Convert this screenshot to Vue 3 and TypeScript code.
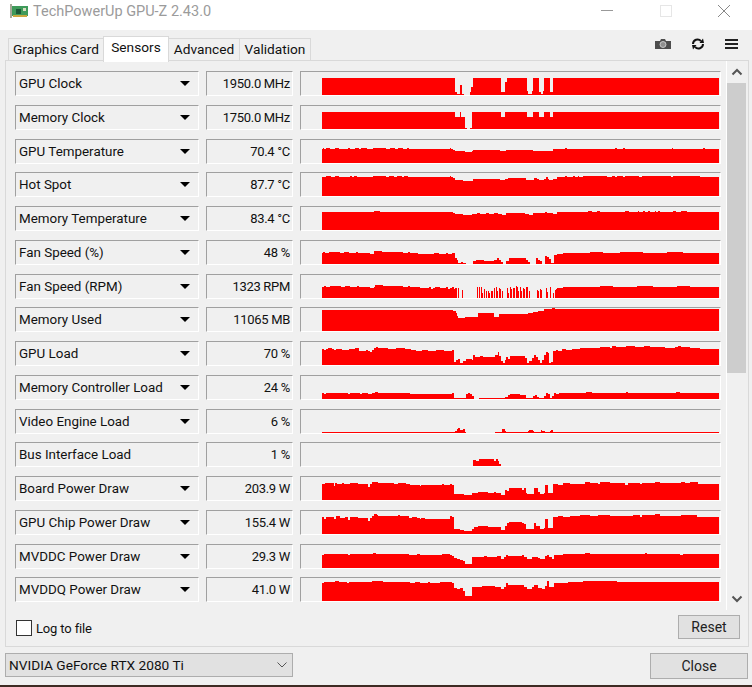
<script setup lang="ts">
type Step = [number, number]
interface Sensor { name: string; value: string; arrow: boolean; steps: Step[] }

// Step x values are measured at 3x from the graph box's 300px origin; the plot starts at 22px.
const W = 397
function path(steps: Step[]): string {
  let d = ''
  for (let i = 0; i < steps.length; i++) {
    const x = Math.round(steps[i][0] / 3 - 22)
    const h = steps[i][1]
    const end = i + 1 < steps.length ? Math.round(steps[i + 1][0] / 3 - 22) : W
    if (h > 0 && end > x) d += `M${x} 24V${24 - h}H${end}V24Z`
  }
  return d
}

const sensors: Sensor[] = [
  { name: 'GPU Clock', value: '1950.0 MHz', arrow: true, steps: [[66,17],[465,3],[470,1],[480,10],[487,1],[492,0],[510,3],[514,8],[520,17],[603,3],[615,13],[620,17],[680,4],[684,1],[696,4],[700,17],[718,3],[722,1],[729,4],[732,17],[750,3],[758,17]] },
  { name: 'Memory Clock', value: '1750.0 MHz', arrow: true, steps: [[66,17],[465,12],[480,17],[484,12],[495,1],[500,0],[510,1],[515,17],[603,12],[615,17],[680,12],[700,17],[718,12],[732,17],[750,12],[760,17]] },
  { name: 'GPU Temperature', value: '70.4 °C', arrow: true, steps: [[66,14],[69,15],[72,14],[78,15],[90,14],[105,15],[117,14],[145,15],[150,14],[165,15],[178,14],[183,15],[200,14],[219,15],[258,14],[270,15],[285,14],[295,15],[310,14],[320,15],[327,14],[450,15],[453,14],[460,13],[465,12],[495,11],[515,12],[520,13],[600,12],[618,13],[700,12],[760,14],[795,15],[800,14],[945,15],[952,14],[970,15],[974,14],[1115,15],[1120,14],[1210,15],[1215,14]] },
  { name: 'Hot Spot', value: '87.7 °C', arrow: true, steps: [[66,19],[78,20],[92,19],[105,20],[118,19],[150,20],[156,19],[162,20],[171,19],[219,20],[258,19],[268,20],[282,19],[291,20],[306,19],[312,20],[324,19],[450,20],[453,19],[459,18],[465,16],[490,15],[518,17],[600,16],[615,17],[625,18],[678,16],[702,18],[712,17],[716,16],[732,17],[737,19],[743,17],[747,16],[760,17],[770,19],[795,20],[800,19],[818,20],[824,19],[833,20],[838,19],[850,20],[922,19],[935,20],[945,19],[952,20],[970,19],[975,20],[1017,19],[1026,20],[1113,19],[1120,20],[1200,19]] },
  { name: 'Memory Temperature', value: '83.4 °C', arrow: true, steps: [[66,18],[222,19],[240,18],[458,17],[465,16],[490,15],[515,16],[530,17],[540,16],[558,17],[566,16],[582,17],[594,16],[606,15],[618,17],[675,16],[688,15],[700,17],[735,18],[741,17],[760,16],[770,18],[865,19],[875,18],[890,19],[900,18],[975,19],[987,18],[1015,19],[1018,18],[1030,19],[1035,18],[1045,19],[1050,18],[1065,19],[1068,18],[1075,19],[1080,18],[1118,19],[1128,18],[1143,19],[1160,18]] },
  { name: 'Fan Speed (%)', value: '48 %', arrow: true, steps: [[66,11],[70,12],[76,11],[87,12],[120,11],[132,12],[147,11],[168,12],[174,11],[210,10],[222,13],[246,12],[309,11],[324,12],[330,11],[354,10],[402,11],[417,10],[438,11],[444,10],[456,11],[465,6],[471,4],[474,1],[483,2],[489,1],[498,0],[519,3],[528,4],[552,3],[582,4],[591,6],[597,4],[603,2],[609,0],[618,3],[627,6],[678,4],[684,2],[690,0],[708,6],[714,4],[720,3],[726,0],[735,8],[741,7],[747,5],[753,1],[762,9],[771,10],[789,11],[870,12],[910,11],[960,12],[1030,11],[1100,12],[1150,11]] },
  { name: 'Fan Speed (RPM)', value: '1323 RPM', arrow: true, steps: [[66,11],[72,12],[78,11],[90,12],[123,11],[135,12],[150,11],[171,12],[177,11],[210,10],[222,11],[225,13],[249,12],[309,11],[324,12],[330,11],[360,10],[387,11],[393,9],[399,10],[405,11],[420,10],[438,11],[444,9],[450,10],[456,11],[462,9],[465,10],[471,0],[474,10],[477,0],[486,8],[489,0],[531,11],[534,0],[537,11],[540,0],[543,11],[546,5],[549,0],[552,9],[555,0],[558,7],[561,0],[564,7],[567,5],[570,0],[573,7],[579,0],[582,10],[585,0],[588,11],[591,7],[594,0],[597,10],[600,9],[603,0],[606,7],[609,0],[621,10],[624,5],[627,0],[630,11],[633,9],[636,0],[639,10],[645,0],[648,12],[651,11],[654,7],[657,0],[660,11],[663,7],[666,0],[669,10],[672,9],[675,0],[678,11],[684,0],[687,7],[690,0],[711,8],[714,7],[717,0],[720,9],[723,8],[726,0],[738,10],[741,6],[744,0],[750,11],[753,0],[759,5],[762,0],[765,8],[768,9],[771,10],[789,11],[900,12],[940,11],[1010,12],[1060,11],[1130,12],[1170,11]] },
  { name: 'Memory Used', value: '11065 MB', arrow: true, steps: [[66,21],[459,20],[468,18],[471,15],[474,13],[495,14],[534,18],[582,14],[597,17],[684,18],[699,19],[714,20],[732,22],[756,23],[765,22]] },
  { name: 'GPU Load', value: '70 %', arrow: true, steps: [[66,16],[72,15],[78,16],[84,17],[96,16],[102,15],[108,16],[126,15],[147,16],[165,17],[177,14],[198,15],[204,14],[210,13],[216,15],[222,17],[228,18],[234,17],[264,16],[288,17],[315,16],[333,15],[348,14],[366,15],[384,14],[408,15],[432,14],[456,15],[462,3],[468,5],[474,6],[480,2],[489,4],[498,6],[516,5],[519,10],[525,8],[540,9],[549,8],[585,10],[594,13],[597,9],[603,4],[609,2],[615,5],[618,8],[624,6],[630,9],[675,7],[681,2],[687,4],[696,7],[702,10],[708,8],[714,5],[720,2],[726,5],[732,10],[738,13],[744,12],[747,2],[753,3],[759,14],[768,15],[774,14],[786,16],[798,15],[816,16],[840,17],[900,18],[930,17],[936,19],[948,18],[978,19],[1005,18],[1032,19],[1050,18],[1095,17],[1125,18],[1134,19],[1143,18],[1170,17],[1200,16]] },
  { name: 'Memory Controller Load', value: '24 %', arrow: true, steps: [[66,6],[72,5],[78,6],[144,5],[150,6],[180,5],[186,6],[204,5],[216,6],[225,7],[234,6],[330,5],[450,5],[456,6],[462,1],[498,5],[504,6],[510,5],[516,3],[522,0],[537,1],[615,2],[624,4],[630,5],[660,4],[678,1],[699,3],[705,4],[711,2],[717,1],[732,3],[738,6],[744,5],[750,1],[756,3],[762,6],[768,5],[777,6],[858,7],[876,6],[978,7],[984,6],[1128,7],[1140,6]] },
  { name: 'Video Engine Load', value: '6 %', arrow: true, steps: [[66,1],[465,2],[470,4],[475,5],[480,3],[490,4],[495,1],[498,0],[585,1],[606,4],[615,2],[618,1],[684,2],[687,3],[699,2],[702,1],[723,3],[726,2],[735,1],[750,2],[753,3],[759,1]] },
  { name: 'Bus Interface Load', value: '1 %', arrow: false, steps: [[66,0],[519,6],[528,5],[537,7],[582,5],[588,7],[594,5],[597,2],[603,0]] },
  { name: 'Board Power Draw', value: '203.9 W', arrow: true, steps: [[66,16],[75,17],[102,14],[105,17],[111,16],[126,17],[132,16],[150,17],[174,16],[204,13],[210,16],[216,18],[234,17],[282,16],[294,17],[318,16],[330,15],[360,14],[363,15],[426,16],[432,15],[450,16],[456,15],[462,6],[492,5],[516,7],[534,8],[564,7],[582,8],[588,7],[603,5],[615,10],[621,9],[627,12],[666,10],[672,12],[678,7],[681,6],[702,12],[714,8],[720,6],[732,7],[735,15],[744,7],[759,16],[774,15],[790,17],[810,16],[855,18],[870,17],[894,16],[900,18],[930,17],[975,15],[984,17],[1020,16],[1026,17],[1065,18],[1080,17],[1143,18],[1155,17],[1170,18],[1194,16]] },
  { name: 'GPU Chip Power Draw', value: '155.4 W', arrow: true, steps: [[66,17],[72,15],[78,17],[102,15],[108,18],[120,16],[135,17],[144,14],[150,17],[174,16],[204,13],[210,16],[216,18],[222,20],[230,19],[234,18],[295,19],[300,18],[327,16],[336,17],[350,16],[360,15],[363,16],[375,15],[450,18],[456,17],[462,5],[480,4],[492,3],[516,5],[522,7],[534,8],[564,7],[603,4],[615,8],[621,11],[627,12],[666,11],[672,10],[678,5],[702,11],[708,8],[720,5],[732,6],[735,15],[744,6],[759,17],[774,18],[790,17],[810,18],[840,19],[870,18],[894,19],[930,18],[1000,19],[1020,17],[1026,19],[1065,20],[1080,18],[1143,19],[1190,17]] },
  { name: 'MVDDC Power Draw', value: '29.3 W', arrow: true, steps: [[66,13],[72,14],[138,14],[144,13],[150,14],[220,15],[228,14],[327,13],[350,14],[360,13],[426,14],[450,13],[456,12],[462,10],[470,9],[480,8],[490,7],[495,4],[516,11],[552,12],[560,11],[590,12],[603,9],[612,11],[618,13],[624,12],[666,13],[672,11],[680,9],[696,11],[714,10],[720,9],[735,12],[741,13],[747,11],[756,9],[762,13],[790,14],[855,15],[870,14],[1035,15],[1040,14],[1140,13],[1148,14]] },
  { name: 'MVDDQ Power Draw', value: '41.0 W', arrow: true, steps: [[66,18],[72,19],[105,20],[117,19],[141,18],[147,19],[216,20],[250,19],[330,18],[345,19],[360,18],[384,19],[390,18],[420,19],[456,18],[462,13],[470,12],[480,13],[490,10],[495,5],[516,14],[545,15],[585,14],[603,12],[612,14],[618,18],[624,16],[666,16],[672,14],[680,12],[696,14],[702,16],[714,13],[726,12],[735,15],[741,20],[747,14],[762,18],[804,19],[850,20],[950,19]] },
]
const paths = sensors.map((s) => path(s.steps))
const tabs = ['Graphics Card', 'Sensors', 'Advanced', 'Validation']
</script>

<template>
  <div class="win">
    <header class="title">
      <svg class="appicon" width="20" height="16" viewBox="0 0 20 16">
        <path d="M0 1h2v14H0z" fill="#a8a898" />
        <rect x="2" y="3" width="16" height="10" fill="#3f9a5a" />
        <rect x="6" y="6" width="5" height="5" fill="#1c5a38" />
        <rect x="13" y="5" width="3" height="3" fill="#d8dcc0" />
        <rect x="3" y="12" width="14" height="2" fill="#c9a63e" />
      </svg>
      <span class="title-text">TechPowerUp GPU-Z 2.43.0</span>
      <div class="caps">
        <svg width="46" height="22" viewBox="0 0 46 22"><path d="M17 10.500H29" stroke="#999" /></svg>
        <svg width="46" height="22" viewBox="0 0 46 22"><rect x="17.500" y="5.500" width="11" height="11" fill="none" stroke="#e6e6e6" /></svg>
        <svg width="46" height="22" viewBox="0 0 46 22"><path d="M17 5l12 12M29 5L17 17" stroke="#888" fill="none" /></svg>
      </div>
    </header>

    <div class="tabbar">
      <div class="tabs">
        <div v-for="t in tabs" :key="t" class="tab" :class="{ active: t === 'Sensors' }">{{ t }}</div>
      </div>
      <div class="tools">
        <svg width="16" height="10" viewBox="0 0 16 10"><path d="M0 2h5l1-2h4l1 2h5v8H0z" fill="#4d4d4d" /><circle cx="8" cy="5.500" r="3" fill="#8f8f8f" stroke="#dcdcdc" stroke-width=".8" /></svg>
        <svg width="14" height="12" viewBox="0 0 14 12"><path d="M2 6a4.500 4.500 0 0 1 8-2.800M12 6a4.500 4.500 0 0 1-8 2.800" fill="none" stroke="#111" stroke-width="2" /><path d="M8.500 5H13L12 .5zM5.500 7H1l1 4.500z" fill="#111" /></svg>
        <svg width="13" height="10" viewBox="0 0 13 10"><path d="M0 1h13M0 5h13M0 9h13" stroke="#222" stroke-width="2" /></svg>
      </div>
    </div>

    <section class="panel">
      <div class="list-wrap">
        <div class="list">
          <div v-for="(s, i) in sensors" :key="s.name" class="row">
            <div class="name">
              <span>{{ s.name }}</span>
              <i v-if="s.arrow" class="caret"></i>
            </div>
            <div class="value">{{ s.value }}</div>
            <div class="graph">
              <svg width="397" height="24" viewBox="0 0 397 24" shape-rendering="crispEdges"><path :d="paths[i]" fill="#ff0000" /></svg>
            </div>
          </div>
        </div>
        <div class="scroll">
          <svg width="12" height="8" viewBox="0 0 12 8"><path d="M1.500 6.500L6 2l4.500 4.500" fill="none" stroke="#555" stroke-width="2" /></svg>
          <div class="thumb"></div>
          <svg class="down" width="12" height="8" viewBox="0 0 12 8"><path d="M1.500 1.500L6 6l4.500-4.500" fill="none" stroke="#555" stroke-width="2" /></svg>
        </div>
      </div>
      <div class="log">
        <label class="check"><span class="box"></span><span class="log-text">Log to file</span></label>
        <div class="btn reset">Reset</div>
      </div>
    </section>

    <footer class="foot">
      <div class="select">
        <span>NVIDIA GeForce RTX 2080 Ti</span>
        <svg width="10" height="6" viewBox="0 0 10 6"><path d="M.5.500L5 5 9.500.500" fill="none" stroke="#555" /></svg>
      </div>
      <div class="btn close">Close</div>
    </footer>
    <div class="edge"></div>
  </div>
</template>

<style scoped>
.win { width: 752px; height: 687px; display: flex; flex-direction: column; background: #f0f0f0; font-family: Roboto, "Liberation Sans", Arial, sans-serif; font-size: 13.700px; color: #111; overflow: hidden; }
.title { height: 30px; background: #fff; display: flex; align-items: flex-start; padding-left: 10px; flex: none; box-sizing: border-box; }
.appicon { margin: 3px 3px 0 0; flex: none; }
.title-text { color: #9b9b9b; font-size: 14.500px; line-height: 24px; }
.caps { margin-left: auto; display: flex; gap: 12.500px; padding-right: 5px; }
.tabbar { height: 30px; display: flex; justify-content: space-between; align-items: flex-end; flex: none; padding: 0 14px 0 8px; box-sizing: border-box; }
.tabs { display: flex; align-items: flex-end; position: relative; z-index: 1; }
.tab { box-sizing: border-box; height: 22px; line-height: 21px; text-align: center; background: #f0f0f0; border: 1px solid #d9d9d9; border-bottom: 0; margin-left: -1px; }
.tab:nth-child(1) { width: 96px; margin-left: 0; }
.tab:nth-child(2) { width: 66px; }
.tab:nth-child(3) { width: 72px; }
.tab:nth-child(4) { width: 72px; }
.tab.active { height: 26px; background: #fff; margin-bottom: -2px; position: relative; z-index: 1; }
.tools { display: flex; gap: 20px; align-items: center; height: 28px; align-self: flex-start; }
.tools svg { display: block; }
.panel { margin: 0 3px 0 5px; height: 587px; flex: none; border: 1px solid #d9d9d9; display: flex; flex-direction: column; box-sizing: border-box; }
.list-wrap { height: 549px; flex: none; display: flex; }
.list { width: 720px; flex: none; display: flex; flex-direction: column; padding: 10px 0 0 9px; box-sizing: border-box; gap: 9px; overflow: hidden; }
.row { height: 25px; display: flex; flex: none; gap: 7px; }
.row:nth-child(4n) { margin-top: -1px; }
.name, .value, .graph { box-sizing: border-box; height: 25px; border-top: 1px solid #a0a0a0; border-left: 1px solid #a0a0a0; border-right: 1px solid #fff; border-bottom: 1px solid #fff; flex: none; }
.name { width: 184px; padding-left: 3px; line-height: 23px; position: relative; font-size: 13.400px; }
.caret { position: absolute; right: 8px; top: 9px; width: 0; height: 0; border: 5px solid transparent; border-top: 5px solid #000; border-bottom: 0; }
.value { width: 87px; text-align: right; padding-right: 2px; line-height: 23px; font-size: 13px; letter-spacing: -0.3px; }
.graph { width: 421px; position: relative; }
.graph svg { position: absolute; left: 21px; top: -1px; display: block; }
.scroll { width: 21px; flex: none; border-left: 1px solid #fff; display: flex; flex-direction: column; align-items: center; box-sizing: border-box; padding: 7px 0; }
.scroll svg { flex: none; display: block; }
.thumb { width: 19px; height: 290px; background: #cdcdcd; margin: 7px 1px 0 0; flex: none; }
.down { margin-top: auto; }
.log { flex: 1; display: flex; justify-content: space-between; align-items: flex-start; padding: 5px 8px 0 10px; }
.check { display: flex; align-items: center; gap: 4px; margin-top: 5px; }
.log-text { font-size: 13px; letter-spacing: -0.15px; }
.box { box-sizing: border-box; width: 16px; height: 16px; background: #fff; border: 1px solid #333; display: block; }
.btn { box-sizing: border-box; border: 1px solid #adadad; background: #e1e1e1; text-align: center; color: #222; font-size: 14px; }
.reset { width: 62px; height: 24px; line-height: 22px; }
.foot { height: 38px; display: flex; justify-content: space-between; padding: 6px 4px 0 5px; flex: none; align-items: flex-start; box-sizing: border-box; }
.select { box-sizing: border-box; width: 288px; height: 24px; background: #e1e1e1; border: 1px solid #adadad; display: flex; align-items: center; justify-content: space-between; padding: 0 5px 0 3px; }
.close { width: 98px; height: 26px; line-height: 25px; }
.edge { height: 2px; background: #3d2a22; flex: none; }
</style>
